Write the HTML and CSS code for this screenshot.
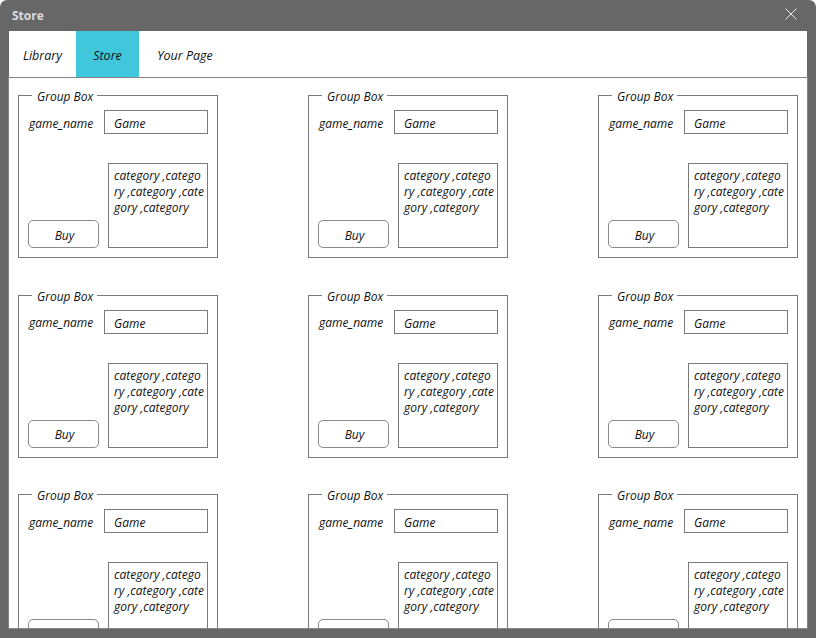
FILE: index.html
```html
<!DOCTYPE html>
<html>
<head>
<meta charset="utf-8">
<title>Store</title>
<link rel="stylesheet" href="styles.css">
</head>
<body>
<div class="window">
  <div class="titlebar">
    <span class="title">Store</span>
    <svg class="close" width="12" height="12" viewBox="0 0 12 12"><path d="M0.5 0.5 L11.5 11.5 M11.5 0.5 L0.5 11.5" stroke="#e8e8e8" stroke-width="1" fill="none"/></svg>
  </div>
  <div class="client">
    <div class="tabs">
      <div class="tab tab-library">Library</div>
      <div class="tab tab-store active">Store</div>
      <div class="tab tab-page">Your Page</div>
    </div>
    <div class="panel">
      <div class="grid">
        <div class="gbox"><span class="legend">Group Box</span><div class="row"><span class="label">game_name</span><div class="textbox">Game</div></div><div class="bottom"><div class="btn">Buy</div><div class="cats">category ,category ,category ,category ,category</div></div></div>
        <div class="gbox"><span class="legend">Group Box</span><div class="row"><span class="label">game_name</span><div class="textbox">Game</div></div><div class="bottom"><div class="btn">Buy</div><div class="cats">category ,category ,category ,category ,category</div></div></div>
        <div class="gbox"><span class="legend">Group Box</span><div class="row"><span class="label">game_name</span><div class="textbox">Game</div></div><div class="bottom"><div class="btn">Buy</div><div class="cats">category ,category ,category ,category ,category</div></div></div>
        <div class="gbox"><span class="legend">Group Box</span><div class="row"><span class="label">game_name</span><div class="textbox">Game</div></div><div class="bottom"><div class="btn">Buy</div><div class="cats">category ,category ,category ,category ,category</div></div></div>
        <div class="gbox"><span class="legend">Group Box</span><div class="row"><span class="label">game_name</span><div class="textbox">Game</div></div><div class="bottom"><div class="btn">Buy</div><div class="cats">category ,category ,category ,category ,category</div></div></div>
        <div class="gbox"><span class="legend">Group Box</span><div class="row"><span class="label">game_name</span><div class="textbox">Game</div></div><div class="bottom"><div class="btn">Buy</div><div class="cats">category ,category ,category ,category ,category</div></div></div>
        <div class="gbox"><span class="legend">Group Box</span><div class="row"><span class="label">game_name</span><div class="textbox">Game</div></div><div class="bottom"><div class="btn">Buy</div><div class="cats">category ,category ,category ,category ,category</div></div></div>
        <div class="gbox"><span class="legend">Group Box</span><div class="row"><span class="label">game_name</span><div class="textbox">Game</div></div><div class="bottom"><div class="btn">Buy</div><div class="cats">category ,category ,category ,category ,category</div></div></div>
        <div class="gbox"><span class="legend">Group Box</span><div class="row"><span class="label">game_name</span><div class="textbox">Game</div></div><div class="bottom"><div class="btn">Buy</div><div class="cats">category ,category ,category ,category ,category</div></div></div>
      </div>
    </div>
  </div>
</div>
</body>
</html>
```
FILE: styles.css
```css
* { box-sizing: border-box; }
html, body { margin: 0; padding: 0; background: #ffffff; }
body { width: 816px; height: 638px; overflow: hidden; font-family: "Open Sans", "Noto Sans", sans-serif; }

.window {
  width: 816px;
  height: 638px;
  background: #676767;
  border-radius: 7px 7px 0 0;
  display: flex;
  flex-direction: column;
}

.titlebar {
  height: 31px;
  flex: none;
  display: flex;
  align-items: center;
  justify-content: space-between;
  padding: 0 19px 1px 12px;
}
.title {
  color: #dcdcdc;
  font-family: "Open Sans", sans-serif;
  font-weight: 700;
  font-size: 12px;
}
.close { display: block; margin-top: -2px; }

.client {
  flex: 1;
  min-height: 0;
  margin: 0 8px 9px 8px;
  display: flex;
  flex-direction: column;
}

.tabs {
  height: 46px;
  flex: none;
  margin: 0 1px;
  background: #ffffff;
  display: flex;
}
.tab {
  display: flex;
  align-items: center;
  justify-content: center;
  font-style: italic;
  font-size: 12.5px;
  color: #111;
  padding-top: 3px;
}
.tab-library { width: 67px; }
.tab-store { width: 63px; }
.tab-page { width: 92px; }
.tab.active { background: #40c7db; }

.panel {
  flex: 1;
  min-height: 0;
  overflow: hidden;
  background: #ffffff;
  border: 1px solid #858585;
  padding: 17px 9px 0 9px;
}

.grid {
  display: grid;
  grid-template-columns: repeat(3, 200px);
  grid-auto-rows: 163px;
  column-gap: 90px;
  row-gap: 36.5px;
}

.gbox {
  border: 1px solid #7a7a7a;
  padding: 0 9px 9px 9px;
  display: flex;
  flex-direction: column;
  font-style: italic;
  font-size: 12px;
  color: #111;
}
.legend {
  align-self: flex-start;
  height: 16px;
  line-height: 16px;
  margin: -9px 0 0 4px;
  padding: 2px 4px 0 5px;
  background: #ffffff;
}
.row {
  margin-top: 7px;
  display: flex;
  align-items: center;
  justify-content: space-between;
}
.label { padding-left: 1px; padding-top: 2px; }
.textbox {
  width: 104px;
  height: 24px;
  border: 1px solid #7a7a7a;
  padding: 2px 0 0 9px;
  line-height: 21px;
}
.bottom {
  flex: 1;
  display: flex;
  align-items: flex-end;
  justify-content: space-between;
}
.btn {
  width: 71px;
  height: 28px;
  border: 1px solid #8a8a8a;
  border-radius: 5px;
  display: flex;
  align-items: center;
  justify-content: center;
  padding: 2px 0 0 2px;
}
.cats {
  width: 100px;
  height: 85px;
  border: 1px solid #7a7a7a;
  padding: 4px 3px 0 5px;
  line-height: 16px;
  word-break: break-all;
}
```
